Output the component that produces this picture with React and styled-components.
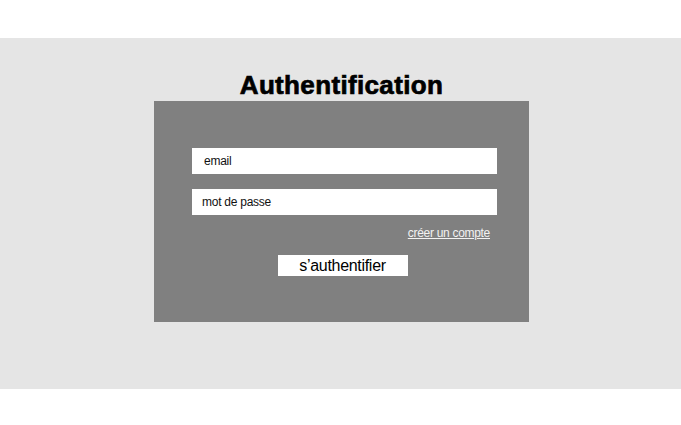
import React from "react";
import styled, { createGlobalStyle } from "styled-components";

const Global = createGlobalStyle`
  html, body { margin: 0; padding: 0; background: #ffffff; }
  body { font-family: "Liberation Sans", Arial, sans-serif; }
`;

const Page = styled.div`
  width: 681px;
  height: 425px;
  padding-top: 38px;
  box-sizing: border-box;
`;

const Band = styled.section`
  background: #e5e5e5;
  height: 351px;
  padding-top: 32px;
  box-sizing: border-box;
  display: flex;
  flex-direction: column;
  align-items: center;
`;

const Title = styled.h1`
  margin: 0 0 1px 2px;
  font-family: "Liberation Sans", Arial, sans-serif;
  font-weight: 700;
  font-size: 26px;
  line-height: 30px;
  color: #000;
  letter-spacing: 0.35px;
  -webkit-text-stroke: 0.7px #000;
`;

const Panel = styled.form`
  width: 375px;
  height: 221px;
  margin-left: 2px;
  background: #808080;
  box-sizing: border-box;
  padding: 47px 32px 0 38px;
  display: flex;
  flex-direction: column;
`;

const Field = styled.div`
  height: 26px;
  background: #fff;
  display: flex;
  align-items: center;
  padding-left: ${(p) => p.$indent}px;
  font-size: 12px;
  letter-spacing: -0.25px;
  color: #111;
  margin-bottom: ${(p) => p.$gap}px;
`;

const LinkRow = styled.div`
  display: flex;
  justify-content: flex-end;
  padding-right: 7px;
  margin-top: 11px;
`;

const Link = styled.a`
  color: #f2f2f2;
  font-size: 12px;
  letter-spacing: -0.3px;
  line-height: 14px;
  text-decoration: underline;
`;

const ButtonRow = styled.div`
  display: flex;
  justify-content: center;
  margin-top: 15px;
  padding-right: 4px;
`;

const Button = styled.div`
  width: 130px;
  height: 21px;
  background: #fff;
  display: flex;
  align-items: center;
  justify-content: center;
  font-size: 16px;
  letter-spacing: -0.3px;
  color: #000;
`;

export default function App() {
  return (
    <>
      <Global />
      <Page>
        <Band>
          <Title>Authentification</Title>
          <Panel onSubmit={(e) => e.preventDefault()}>
            <Field $indent={12} $gap={15}>email</Field>
            <Field $indent={10} $gap={0}>mot de passe</Field>
            <LinkRow>
              <Link href="#">créer un compte</Link>
            </LinkRow>
            <ButtonRow>
              <Button>s’authentifier</Button>
            </ButtonRow>
          </Panel>
        </Band>
      </Page>
    </>
  );
}
